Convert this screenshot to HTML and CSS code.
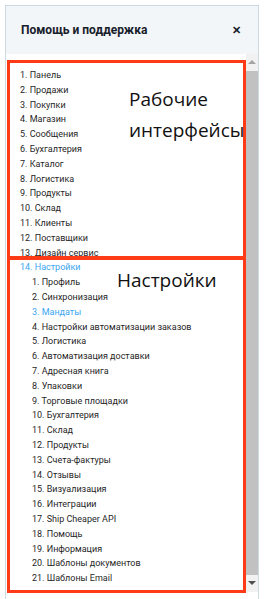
FILE: index.html
```html
<!DOCTYPE html>
<html>
<head>
	<title>Помощь и поддержка</title>
	<link rel="stylesheet" href="styles.css">
</head>
<body>

	<div class="panel">
		<div class="head">
			<strong>Помощь и поддержка</strong>
			<span class="close">&#x2715;</span>
		</div>
		<div class="body">
			<div class="list">
				<div class="item">1. Панель</div>
				<div class="item">2. Продажи</div>
				<div class="item">3. Покупки</div>
				<div class="item">4. Магазин</div>
				<div class="item">5. Сообщения</div>
				<div class="item">6. Бухгалтерия</div>
				<div class="item">7. Каталог</div>
				<div class="item">8. Логистика</div>
				<div class="item">9. Продукты</div>
				<div class="item">10. Склад</div>
				<div class="item">11. Клиенты</div>
				<div class="item">12. Поставщики</div>
				<div class="item">13. Дизайн сервис</div>
				<div class="item active">14. Настройки</div>
				<div class="sub">
					<div class="item">1. Профиль</div>
					<div class="item">2. Синхронизация</div>
					<div class="item active">3. Мандаты</div>
					<div class="item">4. Настройки автоматизации заказов</div>
					<div class="item">5. Логистика</div>
					<div class="item">6. Автоматизация доставки</div>
					<div class="item">7. Адресная книга</div>
					<div class="item">8. Упаковки</div>
					<div class="item">9. Торговые площадки</div>
					<div class="item">10. Бухгалтерия</div>
					<div class="item">11. Склад</div>
					<div class="item">12. Продукты</div>
					<div class="item">13. Счета-фактуры</div>
					<div class="item">14. Отзывы</div>
					<div class="item">15. Визуализация</div>
					<div class="item">16. Интеграции</div>
					<div class="item">17. Ship Cheaper API</div>
					<div class="item">18. Помощь</div>
					<div class="item">19. Информация</div>
					<div class="item">20. Шаблоны документов</div>
					<div class="item">21. Шаблоны Email</div>
				</div>
			</div>
			<div class="scroll">
				<span class="arrow up"></span>
				<span class="thumb"></span>
				<span class="arrow down"></span>
			</div>
		</div>
	</div>

	<!-- annotation marks over the screenshot -->
	<div class="mark mark1"></div>
	<div class="mark mark2"></div>
	<div class="note note1">Рабочие<br>интерфейсы</div>
	<div class="note note2">Настройки</div>

</body>
</html>
```

FILE: styles.css
```css
body {margin:0;font-family:Roboto, "Liberation Sans", sans-serif;background:#fff;}
.panel {margin:5px 0 0 5px;width:252px;height:600px;border:1px solid #cfdae0;border-bottom:none;}
.head {height:48px;background:#f3f6f8;display:flex;align-items:center;justify-content:space-between;padding:0 17px 0 15px;}
.head strong {font-size:12px;font-weight:bold;color:#17202b;}
.close {font-size:11px;font-weight:bold;color:#17202b;}
.body {display:flex;}
.list {flex:1;padding:14px 0 0 14px;font-size:9px;color:#1f1f1f;}
.item {line-height:14.8px;white-space:nowrap;}
.item.active {color:#3aa6f2;}
.sub {padding-left:12px;}
.scroll {width:12px;background:#f1f1f1;display:flex;flex-direction:column;align-items:center;height:538px;}
.thumb {width:12px;height:512px;background:#c1c1c1;}
.arrow {width:0;height:0;border-left:4px solid transparent;border-right:4px solid transparent;margin:6px 0 7px;}
.arrow.up {border-bottom:4px solid #a3a3a3;}
.arrow.down {border-top:4px solid #505050;}

.mark {position:absolute;border:3px solid #ff3a17;}
.mark1 {left:7px;top:60px;width:233px;height:194px;}
.mark2 {left:7px;top:256px;width:233px;height:331px;}
.note {position:absolute;font-family:"Open Sans", sans-serif;font-size:19px;color:#111;line-height:31px;}
.note1 {left:129px;top:84px;}
.note2 {left:117px;top:265px;}
```
